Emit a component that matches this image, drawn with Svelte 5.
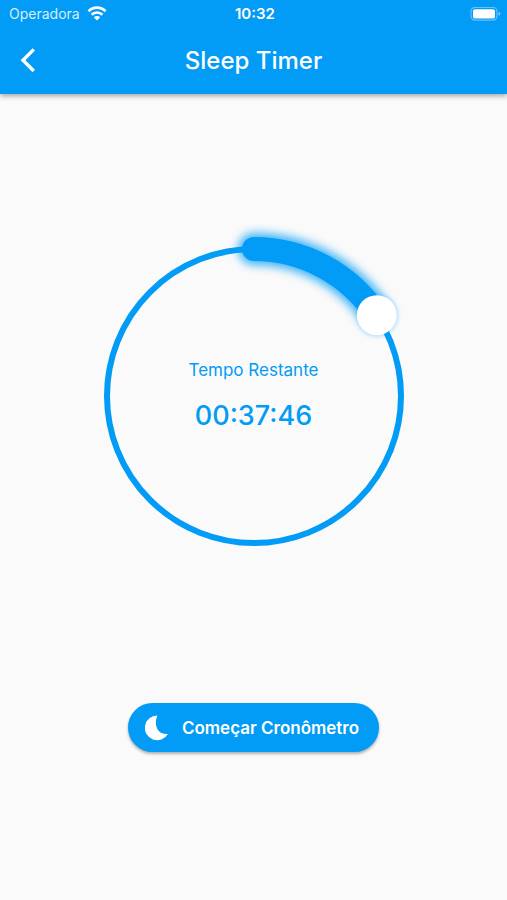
<script lang="ts">
  const MAX_SECONDS = 4 * 60 * 60;
  const CENTER = 150;
  const RADIUS = 147;

  let seconds = $state(37 * 60 + 46);

  let angle = $derived((seconds / MAX_SECONDS) * 2 * Math.PI);
  let knobX = $derived(CENTER + RADIUS * Math.sin(angle));
  let knobY = $derived(CENTER - RADIUS * Math.cos(angle));
  let arc = $derived(
    `M${CENTER} ${CENTER - RADIUS}A${RADIUS} ${RADIUS} 0 ${angle > Math.PI ? 1 : 0} 1 ${knobX} ${knobY}`
  );

  const pad = (n: number) => String(n).padStart(2, "0");

  let remaining = $derived(
    [Math.floor(seconds / 3600), Math.floor(seconds / 60) % 60, seconds % 60].map(pad).join(":")
  );
</script>

<div class="screen">
  <header>
    <div class="status">
      <span class="carrier">
        Operadora
        <svg width="20" height="15" viewBox="0 0 20 15" aria-hidden="true">
          <g fill="none" stroke="currentColor" stroke-width="2.7">
            <path d="M1.5 5.2a12 12 0 0 1 17 0" />
            <path d="M4.6 8.7a7.7 7.7 0 0 1 10.8 0" />
          </g>
          <path d="M6.8 11.2a4.6 4.6 0 0 1 6.4 0L10 14.4z" fill="currentColor" />
        </svg>
      </span>
      <time>10:32</time>
      <svg class="battery" width="31" height="14" viewBox="0 0 31 14" aria-hidden="true">
        <rect x="1" y="0.4" width="26" height="12.8" rx="4" fill="none" stroke="#fff" stroke-opacity="0.4" stroke-width="1.2" />
        <rect x="3" y="2.2" width="22" height="9.2" rx="2" fill="#fff" />
        <path d="M28.6 4.8v4q1.8-.6 1.8-2t-1.8-2z" fill="#fff" fill-opacity="0.5" />
      </svg>
    </div>
    <div class="bar">
      <button class="back" aria-label="Voltar">
        <svg width="16" height="26" viewBox="0 0 16 26" aria-hidden="true">
          <path d="M13.8 1.4 3 12.2 13.8 23" fill="none" stroke="currentColor" stroke-width="3.4" />
        </svg>
      </button>
      <h1>Sleep Timer</h1>
    </div>
  </header>

  <main>
    <div class="dial">
      <svg viewBox="0 0 300 300" aria-hidden="true">
        <defs>
          <filter id="glow" filterUnits="userSpaceOnUse" x="-40" y="-40" width="380" height="380">
            <feGaussianBlur stdDeviation="5" />
          </filter>
          <filter id="knob-glow" filterUnits="userSpaceOnUse" x="-40" y="-40" width="380" height="380">
            <feGaussianBlur stdDeviation="2" />
          </filter>
        </defs>
        <circle class="track" cx={CENTER} cy={CENTER} r={RADIUS} />
        <path class="glow" d={arc} filter="url(#glow)" />
        <path class="progress" d={arc} />
        <circle class="halo" cx={knobX} cy={knobY} r="20" filter="url(#knob-glow)" />
        <circle class="knob" cx={knobX} cy={knobY} r="20" />
      </svg>
      <div class="readout">
        <label for="duration">Tempo Restante</label>
        <output for="duration">{remaining}</output>
      </div>
      <input
        id="duration"
        type="range"
        min="0"
        max={MAX_SECONDS - 1}
        aria-valuetext={remaining}
        bind:value={seconds}
      />
    </div>

    <button class="start">
      <svg width="24" height="26" viewBox="0 0 24 26" aria-hidden="true">
        <path d="M12.4.6A12.3 12.3 0 1 0 22.9 18.9C18.4 19.3 15 17.8 13 15 10.7 11.8 10 6.6 12.4.6z" fill="currentColor" />
      </svg>
      Começar Cronômetro
    </button>
  </main>
</div>

<style>
  :global(body) {
    margin: 0;
  }

  .screen {
    --blue: #029bf5;
    display: flex;
    flex-direction: column;
    min-height: 100vh;
    background: #fafafa;
    color: var(--blue);
    font-family: Inter, "Liberation Sans", sans-serif;
  }

  header {
    background: var(--blue);
    box-shadow: 0 2px 5px rgb(0 0 0 / 35%);
    color: #fff;
  }

  .status {
    display: grid;
    grid-template-columns: 1fr auto 1fr;
    align-items: center;
    height: 27px;
    padding: 0 6px 0 9px;
    font-size: 14px;
  }
  .carrier {
    display: flex;
    align-items: center;
    gap: 7px;
    color: rgb(255 255 255 / 85%);
  }
  .carrier svg {
    color: #fff;
  }
  .status time {
    font-size: 15px;
    font-weight: 600;
  }
  .battery {
    justify-self: end;
  }

  .bar {
    display: grid;
    grid-template-columns: 56px 1fr 56px;
    align-items: center;
    height: 67px;
  }
  .back {
    display: flex;
    justify-content: center;
    padding: 12px 0;
    border: 0;
    background: none;
    color: inherit;
    cursor: pointer;
  }
  h1 {
    margin: 0;
    font-size: 24px;
    font-weight: 500;
    line-height: 32px;
    text-align: center;
  }

  main {
    flex: 1;
    display: flex;
    flex-direction: column;
    align-items: center;
    justify-content: space-between;
    gap: 48px;
    padding: 152px 24px 148px;
  }

  .dial {
    position: relative;
    display: grid;
    place-items: center;
    width: 100%;
    max-width: 300px;
  }
  .dial > svg {
    grid-area: 1 / 1;
    width: 100%;
    overflow: visible;
  }
  .track {
    fill: none;
    stroke: var(--blue);
    stroke-width: 6;
  }
  .progress,
  .glow {
    fill: none;
    stroke: var(--blue);
    stroke-linecap: round;
    stroke-width: 24;
  }
  .glow {
    stroke-width: 32;
    opacity: 0.75;
  }
  .halo {
    fill: var(--blue);
    opacity: 0.3;
  }
  .knob {
    fill: #fff;
  }

  .readout {
    grid-area: 1 / 1;
    display: flex;
    flex-direction: column;
    align-items: center;
    gap: 14px;
    padding-top: 2px;
  }
  .readout label {
    font-size: 17px;
    line-height: 24px;
  }
  .readout output {
    font-size: 27px;
    font-weight: 500;
    line-height: 40px;
  }

  .dial input {
    position: absolute;
    inset: 0;
    width: 100%;
    height: 100%;
    margin: 0;
    opacity: 0;
    cursor: pointer;
  }

  .start {
    display: flex;
    align-items: center;
    gap: 13px;
    height: 49px;
    padding: 0 20px 0 17px;
    border: 0;
    border-radius: 25px;
    background: var(--blue);
    box-shadow: 0 2px 3px rgb(0 0 0 / 30%);
    color: #fff;
    font-family: inherit;
    font-size: 17px;
    font-weight: 600;
    cursor: pointer;
  }
</style>
